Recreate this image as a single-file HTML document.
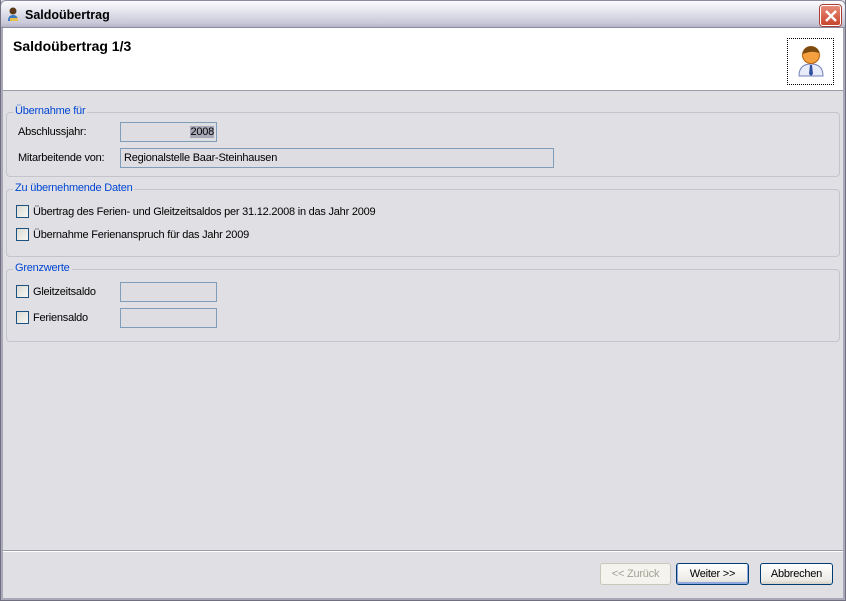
<!DOCTYPE html>
<html><head><meta charset="utf-8"><style>
*{margin:0;padding:0;box-sizing:border-box}
body{width:846px;height:601px;overflow:hidden;background:#e0dfe3;font-family:"Liberation Sans",sans-serif;font-size:11px;letter-spacing:-0.23px;color:#000;position:relative}
.abs{position:absolute}
.frame{left:0;top:0;width:846px;height:601px;border:1px solid #6f6f80;border-top:none}
.frame2{left:1px;top:28px;width:844px;height:572px;border:2px solid #a8a8b8;border-top:none}
.title{left:0;top:0;width:846px;height:28px;background:linear-gradient(#fcfcfe,#e4e4ee 40%,#c8c8d8 85%,#b4b4c4);border-radius:6px 6px 0 0;border:1px solid #8c8ca0}
.title span{position:absolute;left:24px;top:7px;font-weight:bold;font-size:12.5px;letter-spacing:0;color:#000}
.close{left:820px;top:5px;width:21px;height:21px;background:linear-gradient(#e88c7a,#c8442c);border:1px solid #fff;border-radius:3px;box-shadow:0 0 0 1px #a83c30}
.hdr{left:3px;top:28px;width:840px;height:63px;background:#fff;border-bottom:1px solid #9c9ca8}
.hdr b{position:absolute;left:10px;top:10px;font-size:14px;letter-spacing:0}
.grp{border:1px solid #c4c4cc;border-radius:4px}
.leg{background:#e0dfe3;color:#0046d5;padding:0 2px;font-size:11px}
.inp{background:#dedde2;border:1px solid #7f9db9;height:20px;padding:3px 3px;font-size:11px}
.cb{width:13px;height:13px;border:1px solid #1c5180;background:linear-gradient(135deg,#dcdcd6,#f6f6f3)}
.btn{height:22px;border:1px solid #003c74;border-radius:3px;background:linear-gradient(#fff,#ecebe6 80%,#d6d0c5);text-align:center;line-height:20px;font-size:11px}
</style></head><body>
<div class="abs title"><span>Saldoübertrag</span></div>
<svg class="abs" style="left:6px;top:6px" width="14" height="16"><circle cx="7" cy="5" r="3.5" fill="#5a3a1a"/><path d="M2 15 Q2 9 7 9 Q12 9 12 15Z" fill="#3a7ac0"/><rect x="4" y="12" width="8" height="3" fill="#e8c050"/></svg>
<div class="abs close"></div>
<svg class="abs" style="left:824px;top:9px" width="14" height="14"><path d="M2 2L12 12M12 2L2 12" stroke="#fff" stroke-width="2.4"/></svg>
<div class="abs frame"></div>
<div class="abs frame2"></div>
<div class="abs hdr"><b>Saldoübertrag 1/3</b></div>
<div class="abs" style="left:787px;top:38px;width:47px;height:47px;border:1px dotted #000"></div>
<svg class="abs" style="left:796px;top:42px" width="30" height="36"><path d="M3 34 Q3 22 15 22 Q27 22 27 34Z" fill="#e8ecfa" stroke="#7080b8"/><path d="M14 23 L16 23 L17 32 L15 34 L13 32Z" fill="#3050a0"/><circle cx="15" cy="13" r="8.5" fill="#f4a040" stroke="#b06010"/><path d="M7 12 Q8 4 15 4.5 Q22 5 23 11 Q16 8 7 12Z" fill="#7a4a10"/></svg>

<div class="abs grp" style="left:6px;top:112px;width:834px;height:65px"></div>
<div class="abs leg" style="left:13px;top:105px">Übernahme für</div>
<div class="abs" style="left:18px;top:126px">Abschlussjahr:</div>
<div class="abs inp" style="left:120px;top:122px;width:97px;text-align:right;padding-right:2px"><span style="background:#a8a8b8">2008</span></div>
<div class="abs" style="left:18px;top:152px">Mitarbeitende von:</div>
<div class="abs inp" style="left:120px;top:148px;width:434px">Regionalstelle Baar-Steinhausen</div>

<div class="abs grp" style="left:6px;top:189px;width:834px;height:68px"></div>
<div class="abs leg" style="left:13px;top:182px">Zu übernehmende Daten</div>
<div class="abs cb" style="left:16px;top:205px"></div>
<div class="abs" style="left:33px;top:206px">Übertrag des Ferien- und Gleitzeitsaldos per 31.12.2008 in das Jahr 2009</div>
<div class="abs cb" style="left:16px;top:228px"></div>
<div class="abs" style="left:33px;top:229px">Übernahme Ferienanspruch für das Jahr 2009</div>

<div class="abs grp" style="left:6px;top:269px;width:834px;height:73px"></div>
<div class="abs leg" style="left:13px;top:262px">Grenzwerte</div>
<div class="abs cb" style="left:16px;top:285px"></div>
<div class="abs" style="left:33px;top:286px">Gleitzeitsaldo</div>
<div class="abs inp" style="left:120px;top:282px;width:97px"></div>
<div class="abs cb" style="left:16px;top:311px"></div>
<div class="abs" style="left:33px;top:312px">Feriensaldo</div>
<div class="abs inp" style="left:120px;top:308px;width:97px"></div>

<div class="abs" style="left:3px;top:550px;width:840px;height:2px;border-top:1px solid #9c9ca8;border-bottom:1px solid #fff"></div>
<div class="abs btn" style="left:600px;top:563px;width:71px;border-color:#c9c7ba;background:#f4f3ee;color:#a1a192">&lt;&lt; Zurück</div>
<div class="abs btn" style="left:676px;top:563px;width:73px;box-shadow:inset 0 -1px 0 1px #90a8e0">Weiter &gt;&gt;</div>
<div class="abs btn" style="left:760px;top:563px;width:73px">Abbrechen</div>
</body></html>
